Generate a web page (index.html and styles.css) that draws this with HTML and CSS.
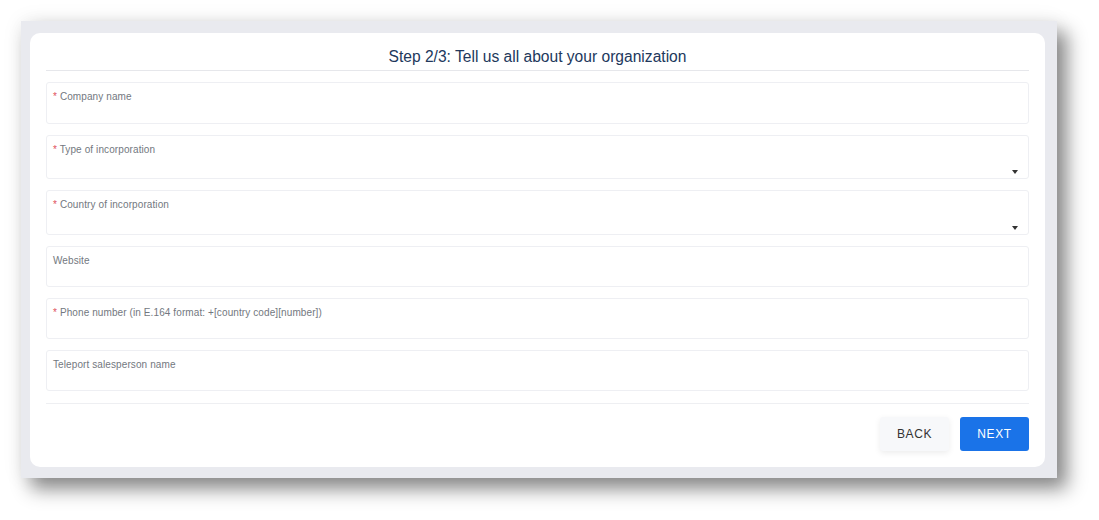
FILE: index.html
```html
<!DOCTYPE html>
<html lang="en">
<head>
    <meta charset="UTF-8">
    <meta name="viewport" content="width=device-width, initial-scale=1.0">
    <title>Step 2/3</title>
    <link rel="stylesheet" href="styles.css">
</head>
<body>
    <div class="frame">
        <div class="card">
            <h1>Step 2/3: Tell us all about your organization</h1>
            <div class="fields">
                <div class="field">
                    <label><span class="req">*</span> Company name</label>
                </div>
                <div class="field select">
                    <label><span class="req">*</span> Type of incorporation</label>
                    <span class="arrow"></span>
                </div>
                <div class="field select tall">
                    <label><span class="req">*</span> Country of incorporation</label>
                    <span class="arrow"></span>
                </div>
                <div class="field short">
                    <label>Website</label>
                </div>
                <div class="field short">
                    <label><span class="req">*</span> Phone number (in E.164 format: +[country code][number])</label>
                </div>
                <div class="field short">
                    <label>Teleport salesperson name</label>
                </div>
            </div>
            <div class="actions">
                <button class="btn back">Back</button>
                <button class="btn next">Next</button>
            </div>
        </div>
    </div>
</body>
</html>
```

FILE: styles.css
```css
html {
    height: 100%;
}
body {
    margin: 0;
    min-height: 100%;
    padding: 21px 0 0 21px;
    box-sizing: border-box;
    background: #fff;
    font-family: 'Liberation Sans', Arial, sans-serif;
}
.frame {
    width: 1036px;
    height: 457px;
    box-sizing: border-box;
    padding: 12px 12px 11px 9px;
    background: #e9eaef;
    box-shadow: 0 0 20px rgba(0, 0, 0, 0.07), 10px 11px 18px rgba(0, 0, 0, 0.45);
}
.card {
    background: #fff;
    border-radius: 10px;
    height: 100%;
    box-sizing: border-box;
    padding: 11px 16px 16px;
    display: flex;
    flex-direction: column;
}
h1 {
    margin: 0;
    font-size: 15.6px;
    font-weight: normal;
    color: #22385c;
    text-align: center;
    line-height: 25px;
    padding-bottom: 1px;
    border-bottom: 1px solid #e6e7eb;
}
.fields {
    display: flex;
    flex-direction: column;
    gap: 11px;
    margin-top: 11px;
}
.field {
    position: relative;
    height: 42px;
    box-sizing: border-box;
    border: 1px solid #eeeff3;
    border-radius: 3px;
    padding: 8px 6px;
}
.field.select {
    height: 44px;
}
.field.tall {
    height: 45px;
}
.field.short {
    height: 41px;
}
label {
    display: block;
    font-size: 10px;
    line-height: 12px;
    color: #737880;
    letter-spacing: 0.1px;
}
.req {
    color: #e0525c;
}
.arrow {
    position: absolute;
    right: 10px;
    bottom: 4px;
    width: 0;
    height: 0;
    border-left: 3.5px solid transparent;
    border-right: 3.5px solid transparent;
    border-top: 4px solid #333;
}
.actions {
    margin-top: 12px;
    border-top: 1px solid #eeeff2;
    padding-top: 13px;
    display: flex;
    justify-content: flex-end;
    gap: 11px;
}
.btn {
    width: 69px;
    height: 34px;
    border: none;
    border-radius: 3px;
    font-family: 'Liberation Sans', Arial, sans-serif;
    font-size: 12px;
    letter-spacing: 0.6px;
    text-transform: uppercase;
    cursor: pointer;
}
.back {
    background: #f7f8fa;
    color: #333;
    box-shadow: 0 2px 6px rgba(0, 0, 0, 0.08);
}
.next {
    background: #1a73e8;
    color: #fff;
}
```
